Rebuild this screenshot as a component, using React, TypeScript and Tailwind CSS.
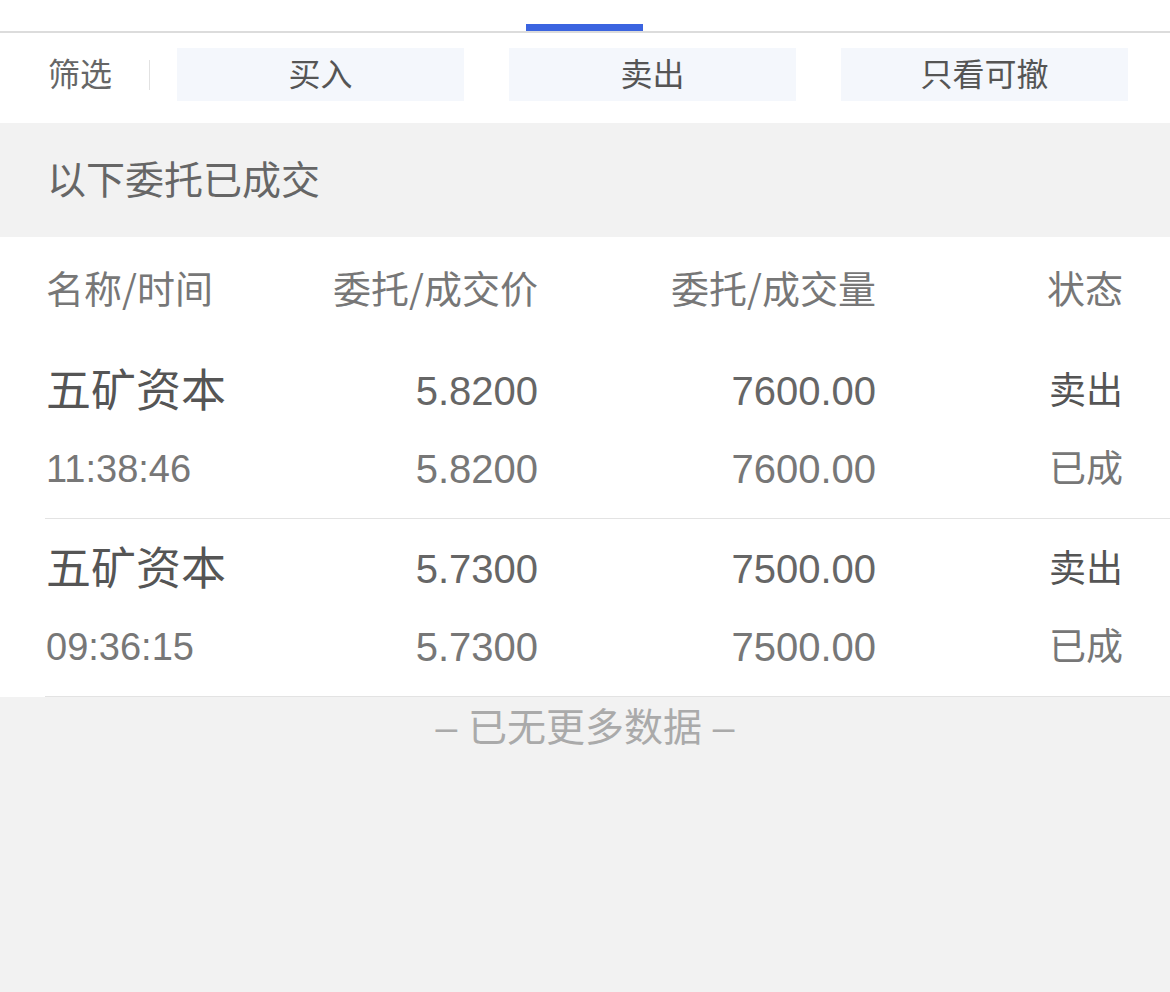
const FONT = '"Liberation Sans", "Noto Sans CJK SC", sans-serif';
const CJK = '"Noto Sans CJK SC", "Liberation Sans", sans-serif';

interface Order {
  name: string;
  time: string;
  price: string;
  dealPrice: string;
  qty: string;
  dealQty: string;
  side: string;
  status: string;
}

const orders: Order[] = [
  { name: '五矿资本', time: '11:38:46', price: '5.8200', dealPrice: '5.8200', qty: '7600.00', dealQty: '7600.00', side: '卖出', status: '已成' },
  { name: '五矿资本', time: '09:36:15', price: '5.7300', dealPrice: '5.7300', qty: '7500.00', dealQty: '7500.00', side: '卖出', status: '已成' },
];

const filters = ['买入', '卖出', '只看可撤'];

export default function App() {
  return (
    <div className="w-[1170px] h-[992px] bg-[#f2f2f2] overflow-hidden" style={{ fontFamily: FONT }}>
      {/* Tab bar with active indicator */}
      <div className="h-[33px] bg-white border-b-2 border-[#dcdcdc] flex items-end">
        <div className="ml-[526px] w-[117px] h-[7px] bg-[#3b64e0]"></div>
      </div>

      {/* Filter row */}
      <div className="bg-white h-[90px] flex items-start pt-[15px] pl-[48px] pr-[42px]">
        <div className="h-[53px] flex items-center">
          <span className="text-[32px] leading-none text-[#666]">筛选</span>
          <div className="w-px h-[30px] bg-[#e2e2e2] ml-[37px] mr-[27px]"></div>
        </div>
        <div className="flex-1 flex gap-[45px]">
          {filters.map((f) => (
            <div
              key={f}
              className="flex-1 h-[53px] bg-[#f4f7fc] flex items-center justify-center text-[32px] leading-none text-[#555]"
            >
              {f}
            </div>
          ))}
        </div>
      </div>

      {/* Section title */}
      <div className="h-[114px] flex items-center pl-[47px] text-[39px] text-[#666] leading-none">
        以下委托已成交
      </div>

      {/* Table */}
      <div className="bg-white">
        <div
          className="h-[104px] pb-[4px] flex items-center pl-[46px] pr-[47px] text-[38px] text-[#777] leading-none"
          style={{ fontFamily: CJK }}
        >
          <div className="w-[250px]">名称/时间</div>
          <div className="w-[242px] text-right">委托/成交价</div>
          <div className="w-[338px] text-right">委托/成交量</div>
          <div className="flex-1 text-right">状态</div>
        </div>

        {orders.map((o, i) => (
          <div key={i} className="ml-[45px] border-b-[1.5px] border-[#e3e3e3] pl-px pr-[47px] pt-[18px] pb-[17px]">
            <div className="h-[64px] flex items-center text-[#666] leading-none">
              <div className="w-[250px] text-[45px] text-[#555]">{o.name}</div>
              <div className="w-[242px] text-right text-[40px]">{o.price}</div>
              <div className="w-[338px] text-right text-[40px]">{o.qty}</div>
              <div className="flex-1 text-right text-[37px] text-[#555]">{o.side}</div>
            </div>
            <div className="h-[64px] mt-[14px] flex items-center text-[#777] leading-none">
              <div className="w-[250px] text-[38px]">{o.time}</div>
              <div className="w-[242px] text-right text-[40px]">{o.dealPrice}</div>
              <div className="w-[338px] text-right text-[40px]">{o.dealQty}</div>
              <div className="flex-1 text-right text-[37px]">{o.status}</div>
            </div>
          </div>
        ))}
      </div>

      {/* Footer */}
      <div className="pt-[11px] text-center text-[39px] leading-[40px] text-[#aaa]">– 已无更多数据 –</div>
    </div>
  );
}
